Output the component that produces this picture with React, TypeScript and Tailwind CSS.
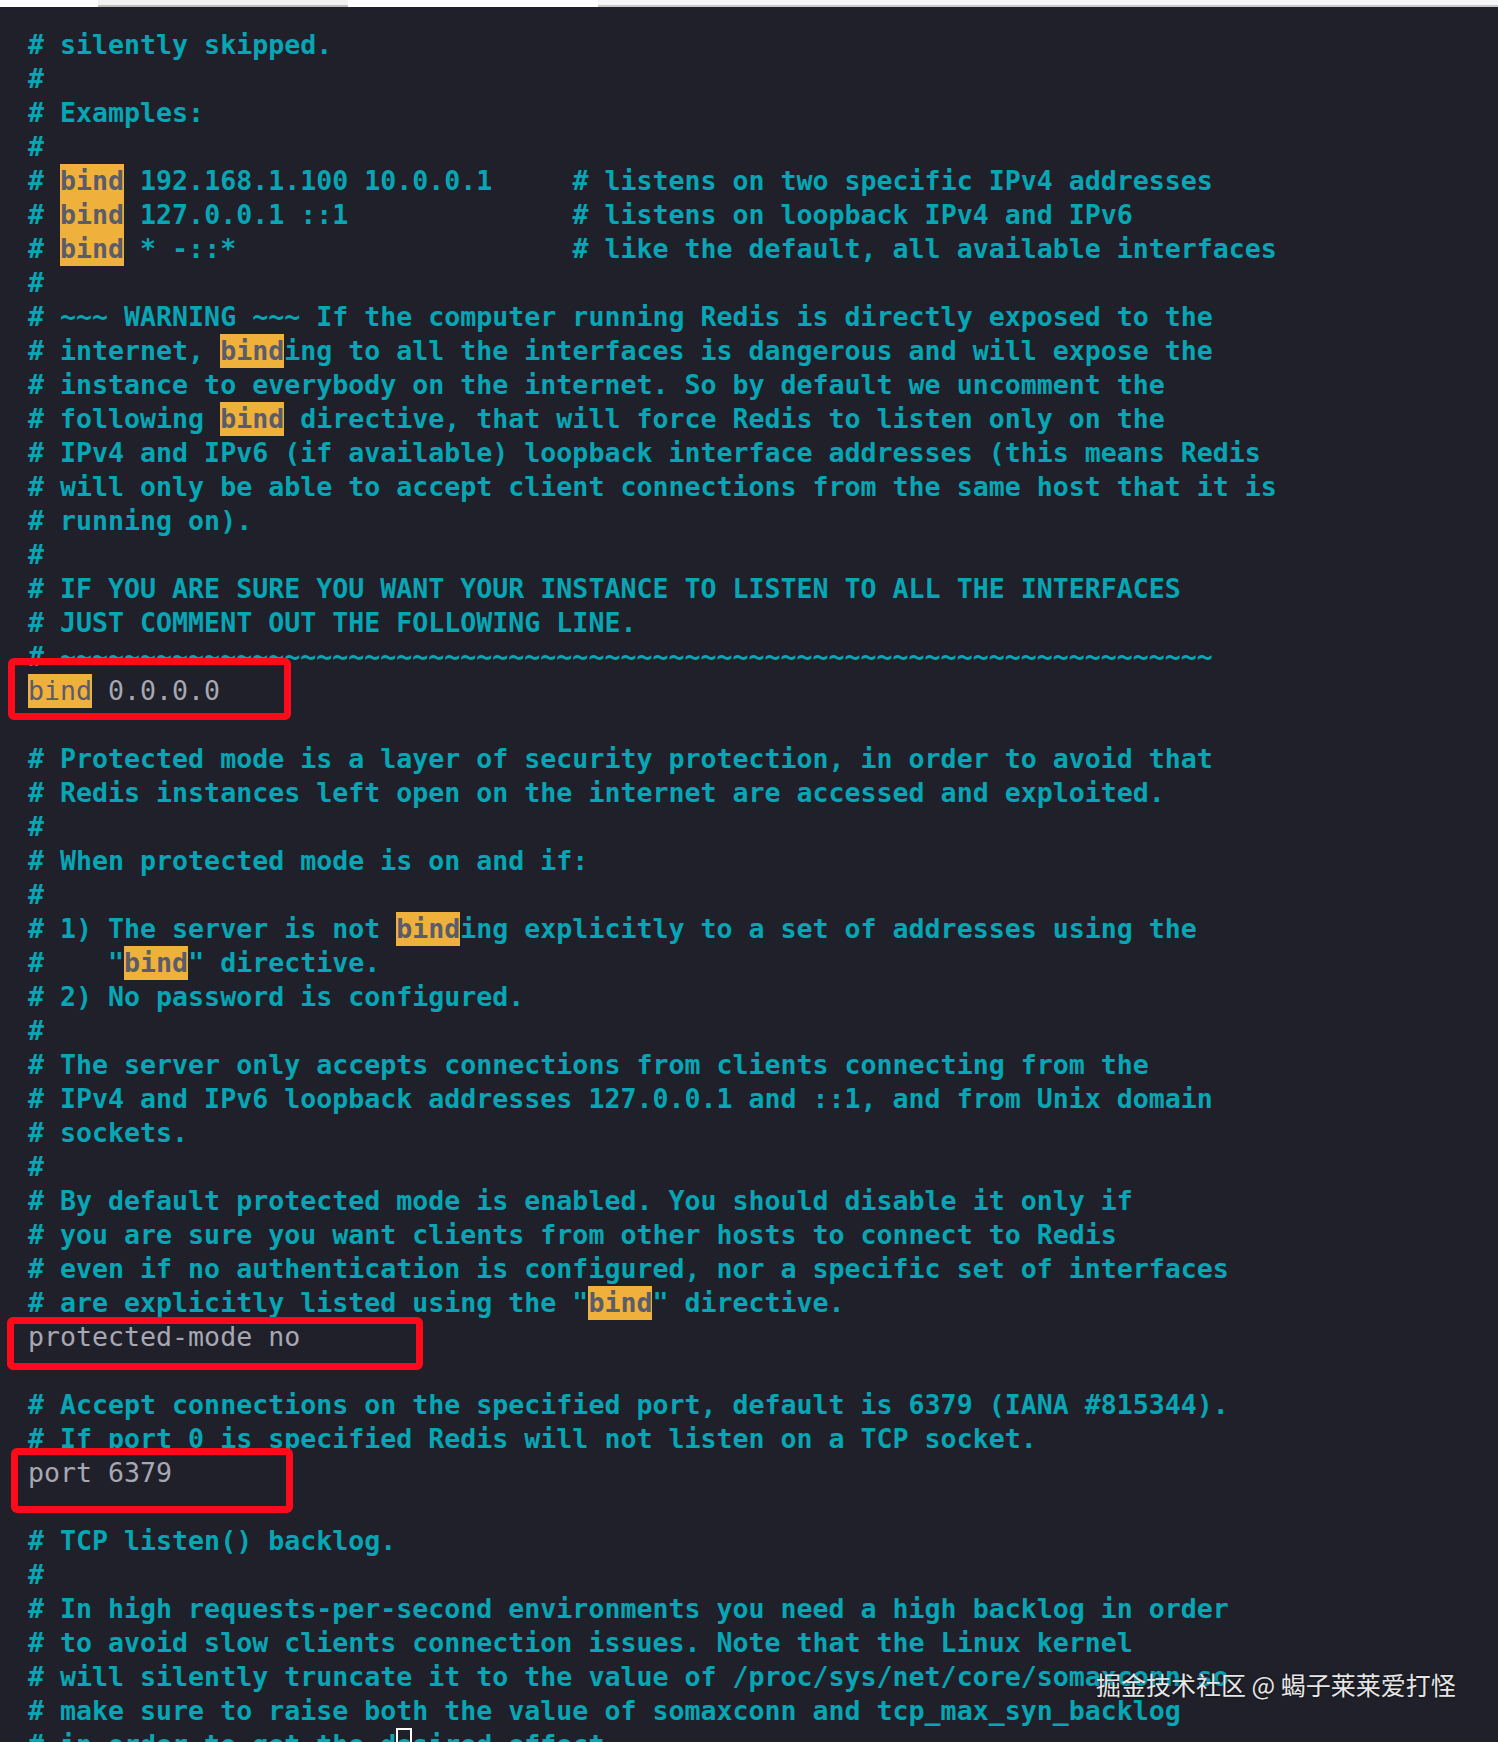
import React from "react";

const TILDES = "~".repeat(72);

const LINES: string[] = [
  "# silently skipped.",
  "#",
  "# Examples:",
  "#",
  "# [bind] 192.168.1.100 10.0.0.1     # listens on two specific IPv4 addresses",
  "# [bind] 127.0.0.1 ::1              # listens on loopback IPv4 and IPv6",
  "# [bind] * -::*                     # like the default, all available interfaces",
  "#",
  "# ~~~ WARNING ~~~ If the computer running Redis is directly exposed to the",
  "# internet, [bind]ing to all the interfaces is dangerous and will expose the",
  "# instance to everybody on the internet. So by default we uncomment the",
  "# following [bind] directive, that will force Redis to listen only on the",
  "# IPv4 and IPv6 (if available) loopback interface addresses (this means Redis",
  "# will only be able to accept client connections from the same host that it is",
  "# running on).",
  "#",
  "# IF YOU ARE SURE YOU WANT YOUR INSTANCE TO LISTEN TO ALL THE INTERFACES",
  "# JUST COMMENT OUT THE FOLLOWING LINE.",
  "# " + TILDES,
  "[bind] 0.0.0.0",
  "",
  "# Protected mode is a layer of security protection, in order to avoid that",
  "# Redis instances left open on the internet are accessed and exploited.",
  "#",
  "# When protected mode is on and if:",
  "#",
  "# 1) The server is not [bind]ing explicitly to a set of addresses using the",
  '#    "[bind]" directive.',
  "# 2) No password is configured.",
  "#",
  "# The server only accepts connections from clients connecting from the",
  "# IPv4 and IPv6 loopback addresses 127.0.0.1 and ::1, and from Unix domain",
  "# sockets.",
  "#",
  "# By default protected mode is enabled. You should disable it only if",
  "# you are sure you want clients from other hosts to connect to Redis",
  "# even if no authentication is configured, nor a specific set of interfaces",
  '# are explicitly listed using the "[bind]" directive.',
  "protected-mode no",
  "",
  "# Accept connections on the specified port, default is 6379 (IANA #815344).",
  "# If port 0 is specified Redis will not listen on a TCP socket.",
  "port 6379",
  "",
  "# TCP listen() backlog.",
  "#",
  "# In high requests-per-second environments you need a high backlog in order",
  "# to avoid slow clients connection issues. Note that the Linux kernel",
  "# will silently truncate it to the value of /proc/sys/net/core/somaxconn so",
  "# make sure to raise both the value of somaxconn and tcp_max_syn_backlog",
  "# in order to get the desired effect.",
];

function Line({ text }: { text: string }) {
  const isComment = text.startsWith("#");
  const parts = text.split("[bind]");
  const base = isComment
    ? "text-[#07a6b4] font-bold"
    : "text-[#a7a8b3] font-normal";
  return (
    <div className={`h-[34px] leading-[34px] whitespace-pre ${base}`}>
      {parts.map((p, i) => (
        <React.Fragment key={i}>
          {i > 0 && (
            <span className="inline-block h-[34px] leading-[34px] bg-[#efb13b] text-[#5a5c6b] align-top">
              bind
            </span>
          )}
          {p}
        </React.Fragment>
      ))}
      {text === "" ? " " : null}
    </div>
  );
}

export default function App() {
  return (
    <div className="relative w-[1498px] h-[1742px] overflow-hidden bg-[#1f2029]">
      {/* top window strip */}
      <div className="flex h-[7px] w-full bg-white">
        <div className="w-[98px] bg-white" />
        <div className="w-[250px] border-b-[2px] border-[#bdbdbd] bg-[#f2f2f2]" />
        <div className="w-[250px] bg-white" />
        <div className="flex-1 border-b-[2px] border-[#c8c8c8] bg-[#f6f6f6]" />
      </div>

      <div
        className="pl-[28px] pt-[21px] text-[26.6px]"
        style={{ fontFamily: '"DejaVu Sans Mono", "Liberation Mono", monospace' }}
      >
        {LINES.map((l, i) => (
          <Line key={i} text={l} />
        ))}
      </div>

      {/* red highlight boxes */}
      <div className="absolute left-[8px] top-[658px] w-[283px] h-[62px] border-[7px] border-[#ff0a1a] rounded-[6px]" />
      <div className="absolute left-[7px] top-[1317px] w-[416px] h-[53px] border-[7px] border-[#ff0a1a] rounded-[6px]" />
      <div className="absolute left-[11px] top-[1448px] w-[282px] h-[65px] border-[7px] border-[#ff0a1a] rounded-[6px]" />

      {/* cursor */}
      <div className="absolute left-[396px] top-[1728px] w-[16px] h-[34px] border-2 border-white" />

      {/* watermark */}
      <div
        className="absolute left-[1096px] top-[1667px] text-[25px] leading-[34px] text-[#e6e6e6] whitespace-nowrap [text-shadow:0_0_3px_rgba(0,0,0,0.6)]"
        style={{ fontFamily: '"Noto Sans CJK SC", "Noto Sans", sans-serif' }}
      >
        掘金技术社区 @ 蝎子莱莱爱打怪
      </div>
    </div>
  );
}
